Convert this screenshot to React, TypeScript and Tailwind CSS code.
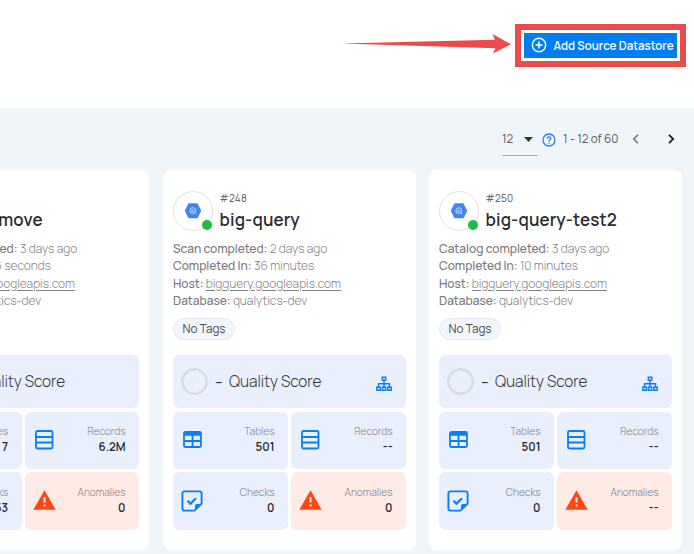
import type { ReactNode } from "react";

const BLUE = "#0a7ff5";

function HexLogo() {
  return (
    <svg width="18" height="18" viewBox="0 0 18 18">
      <path d="M5 1.300h8a.8.8 0 0 1 .7.4l3.300 6.600a1 1 0 0 1 0 1l-3.300 6.600a.8.8 0 0 1-.7.4H5a.8.8 0 0 1-.7-.4L1 9.300a1 1 0 0 1 0-1l3.300-6.600a.8.8 0 0 1 .7-.4z" fill="#4284f3" />
      <circle cx="8.800" cy="8.600" r="2.900" fill="none" stroke="#dbe8ff" strokeWidth=".9" />
      <path d="M7.700 8.400v1.300M8.800 7.200v2.700M9.900 8.600v1.100M10.900 10.700l1.500 1.500" stroke="#dbe8ff" strokeWidth=".8" />
    </svg>
  );
}

function TableIcon() {
  return (
    <svg width="20" height="18" viewBox="0 0 20 18" fill="none" stroke={BLUE} strokeWidth="1.800">
      <rect x="1" y="1" width="17" height="15" rx="1.500" />
      <path d="M1 3h17" strokeWidth="3.500" />
      <path d="M1 10h17M9.500 4v12" />
    </svg>
  );
}

function RecordsIcon() {
  return (
    <svg width="19" height="20" viewBox="0 0 19 20" fill="none" stroke={BLUE} strokeWidth="1.800">
      <rect x="1" y="1" width="16.500" height="17.500" rx="1.500" />
      <path d="M1 7h16.500M1 12.500h16.500" />
    </svg>
  );
}

function ChecksIcon() {
  return (
    <svg className="-ml-px" width="22" height="22" viewBox="0 0 22 22" fill="none" stroke={BLUE} strokeWidth="1.900">
      <path d="M13.500 20.600H3.400a2 2 0 0 1-2-2V3.400a2 2 0 0 1 2-2h15.200a2 2 0 0 1 2 2v10.100z" />
      <path d="M14 20.500v-4.500a2 2 0 0 1 2-2h4.500z" fill={BLUE} stroke="none" />
      <path d="M6.500 10.800l3 2.900 5.500-5.400" strokeWidth="2.200" />
    </svg>
  );
}

function WarningIcon() {
  return (
    <svg className="-mt-px" width="23" height="20" viewBox="0 0 23 20">
      <path d="M11.500.3L22.700 19.700H.3z" fill="#ff4713" />
      <path d="M10.500 7h2v5.500h-2zM10.500 14.500h2v2h-2z" fill="#ffeae5" />
    </svg>
  );
}

function SitemapIcon() {
  return (
    <svg width="16" height="16" viewBox="0 0 16 16" fill="none" stroke={BLUE} strokeWidth="1.500">
      <path d="M6.300 1.300h3.400v3H6.300zM.8 11.300h3.400v3H.8zM6.300 11.300h3.400v3H6.300zM11.800 11.300h3.400v3h-3.400zM8 4.300v7M2.500 11.300V7.700h11v3.600" />
    </svg>
  );
}

function Stat({ icon, label, value, tint }: { icon: ReactNode; label: string; value: string; tint: string }) {
  return (
    <div className={`flex items-center justify-between rounded-md pl-[8px] pr-[13.500px] pb-[2px] ${tint}`}>
      <div className="flex w-[23px] justify-center pt-[2px]">{icon}</div>
      <div className="text-right">
        <div className="text-[10.200px] font-light leading-[15px] text-[#7d8086]">{label}</div>
        <div className="text-[11.500px] font-semibold leading-[15px] text-[#25272b]">{value}</div>
      </div>
    </div>
  );
}

type Store = {
  id: string;
  name: string;
  op: string;
  when: string;
  took: string;
  score?: string;
  tables: string;
  records: string;
  checks: string;
  anomalies: string;
};

const stores: Store[] = [
  { id: "#247", name: "data-move", op: "Catalog", when: "3 days ago", took: "26 seconds", score: "97", tables: "7", records: "6.2M", checks: "53", anomalies: "0" },
  { id: "#248", name: "big-query", op: "Scan", when: "2 days ago", took: "36 minutes", tables: "501", records: "--", checks: "0", anomalies: "0" },
  { id: "#250", name: "big-query-test2", op: "Catalog", when: "3 days ago", took: "10 minutes", tables: "501", records: "--", checks: "0", anomalies: "--" },
];

function Card({ s }: { s: Store }) {
  return (
    <article className="h-[380px] w-[253px] shrink-0 rounded-lg bg-white px-[10px] pt-[21px] first:mr-px first:pl-[11px]">
      <header className="flex h-[40px] gap-[6.500px]">
        <div className="relative flex size-[40px] shrink-0 items-center justify-center rounded-full border border-[#e1e1e4]">
          <HexLogo />
          <span className="absolute right-0 bottom-0 size-[10px] rounded-full bg-[#21ba45]" />
        </div>
        <div className="whitespace-nowrap">
          <div className="text-[10px] leading-[15px] tracking-[0.300px] text-[#55575b]">{s.id}</div>
          <div className="text-[17px] font-semibold leading-[27px] tracking-[0.150px] text-[#2b2c30]">{s.name}</div>
        </div>
      </header>
      <dl className="mt-[9px] whitespace-nowrap text-[12px] font-light leading-[17.300px] tracking-[-0.030px] text-[#828285]">
        <div><b className="font-medium text-[#78787b]">{s.op} completed:</b> {s.when}</div>
        <div><b className="font-medium text-[#78787b]">Completed In:</b> {s.took}</div>
        <div><b className="font-medium text-[#78787b]">Host:</b> <a className="underline underline-offset-2">bigquery.googleapis.com</a></div>
        <div><b className="font-medium text-[#78787b]">Database:</b> qualytics-dev</div>
      </dl>
      <div className="mt-[9px] flex h-[22px] w-[62px] items-center justify-center rounded-full border border-[#dfe9f6] bg-[#f2f6fc] pt-px text-[11.700px] text-[#4a4c50]">No Tags</div>
      <div className="mt-[14.800px] flex h-[53px] items-center rounded-md bg-[#e9effc] pl-[8px] pr-[14px]">
        <svg width="27" height="27" viewBox="0 0 27 27" fill="none">
          <circle cx="13.500" cy="13.500" r="12.200" stroke="#dbdddd" strokeWidth="2.600" />
          <path d="M13.500 0v2.600" stroke="#b9cfe6" />
        </svg>
        <span className="ml-[7px] min-w-[14px] text-[14px] font-medium text-[#333]">
          {s.score ? <span className="mr-[8px]">{s.score}</span> : "–"}
        </span>
        <span className="text-[15.400px] font-light text-[#333539]">Quality Score</span>
        {!s.score && <span className="ml-auto mt-[5px]"><SitemapIcon /></span>}
      </div>
      <div className="mt-[4px] grid grid-cols-2 grid-rows-[57px_58px] gap-[3px] [font-variant-ligatures:none]">
        <Stat icon={<TableIcon />} label="Tables" value={s.tables} tint="bg-[#e9effc]" />
        <Stat icon={<RecordsIcon />} label="Records" value={s.records} tint="bg-[#e9effc]" />
        <Stat icon={<ChecksIcon />} label="Checks" value={s.checks} tint="bg-[#e9effc]" />
        <Stat icon={<WarningIcon />} label="Anomalies" value={s.anomalies} tint="bg-[#ffeae5]" />
      </div>
    </article>
  );
}

export default function App() {
  return (
    <main className="h-[554px] w-[694px] overflow-hidden bg-[#f0f5fa] font-[Manrope,Inter,sans-serif]">
      <header className="flex h-[108px] items-start justify-end bg-white pr-[8px] pt-[24px]">
        <svg className="mr-[4px] mt-[9px]" width="170" height="22" viewBox="0 0 170 22">
          <path d="M0 10.500L154 6.800 151.500 1 170 11.200 152 20.500 154.500 15.300z" fill="#eb4c4b" />
        </svg>
        <div className="border-[6px] border-[#eb4c4b] p-[3px]">
          <button className="flex h-[25px] w-[153px] items-center whitespace-nowrap bg-[#007df2] pl-[7px] text-[11.500px] font-semibold text-white">
            <svg className="-mt-px" width="16" height="16" viewBox="0 0 16 16" fill="none" stroke="white" strokeWidth="1.500">
              <circle cx="8" cy="8" r="6.700" />
              <path d="M8 4.500v7M4.500 8h7" />
            </svg>
            <span className="ml-[6.500px]">Add Source Datastore</span>
          </button>
        </div>
      </header>
      <nav className="flex h-[62px] items-center justify-end pr-[17px] text-[11.700px] text-[#55585c]">
        <div className="flex h-[34px] w-[36px] items-center justify-between border-b border-[#a8adb2] pr-[5px]">
          <span className="mt-[2px]">12</span>
          <svg className="mt-px" width="9" height="5" viewBox="0 0 9 5"><path d="M0 0h9L4.500 5z" fill="#333" /></svg>
        </div>
        <svg className="ml-[4px] mt-[2px]" width="14" height="14" viewBox="0 0 14 14" fill="none" stroke="#2b7cf0" strokeWidth="1.300">
          <circle cx="7" cy="7" r="6" />
          <path d="M5.200 5.700c0-2.500 3.600-2.300 3.600-.2C8.800 6.800 7 6.700 7 8.400M7 9.400v1.300" />
        </svg>
        <span className="ml-[7px] mt-px w-[56px] whitespace-nowrap">1 - 12 of 60</span>
        <svg className="ml-[13px]" width="8" height="10" viewBox="0 0 8 10" fill="none" stroke="#737679" strokeWidth="1.600"><path d="M6 .8L1.800 5 6 9.200" /></svg>
        <svg className="ml-[27px] mr-[2px]" width="8" height="10" viewBox="0 0 8 10" fill="none" stroke="#202124" strokeWidth="1.800"><path d="M2 .8L6.200 5 2 9.200" /></svg>
      </nav>
      <section className="-ml-[104px] flex gap-[13px]">
        {stores.map((s) => <Card key={s.id} s={s} />)}
      </section>
    </main>
  );
}
